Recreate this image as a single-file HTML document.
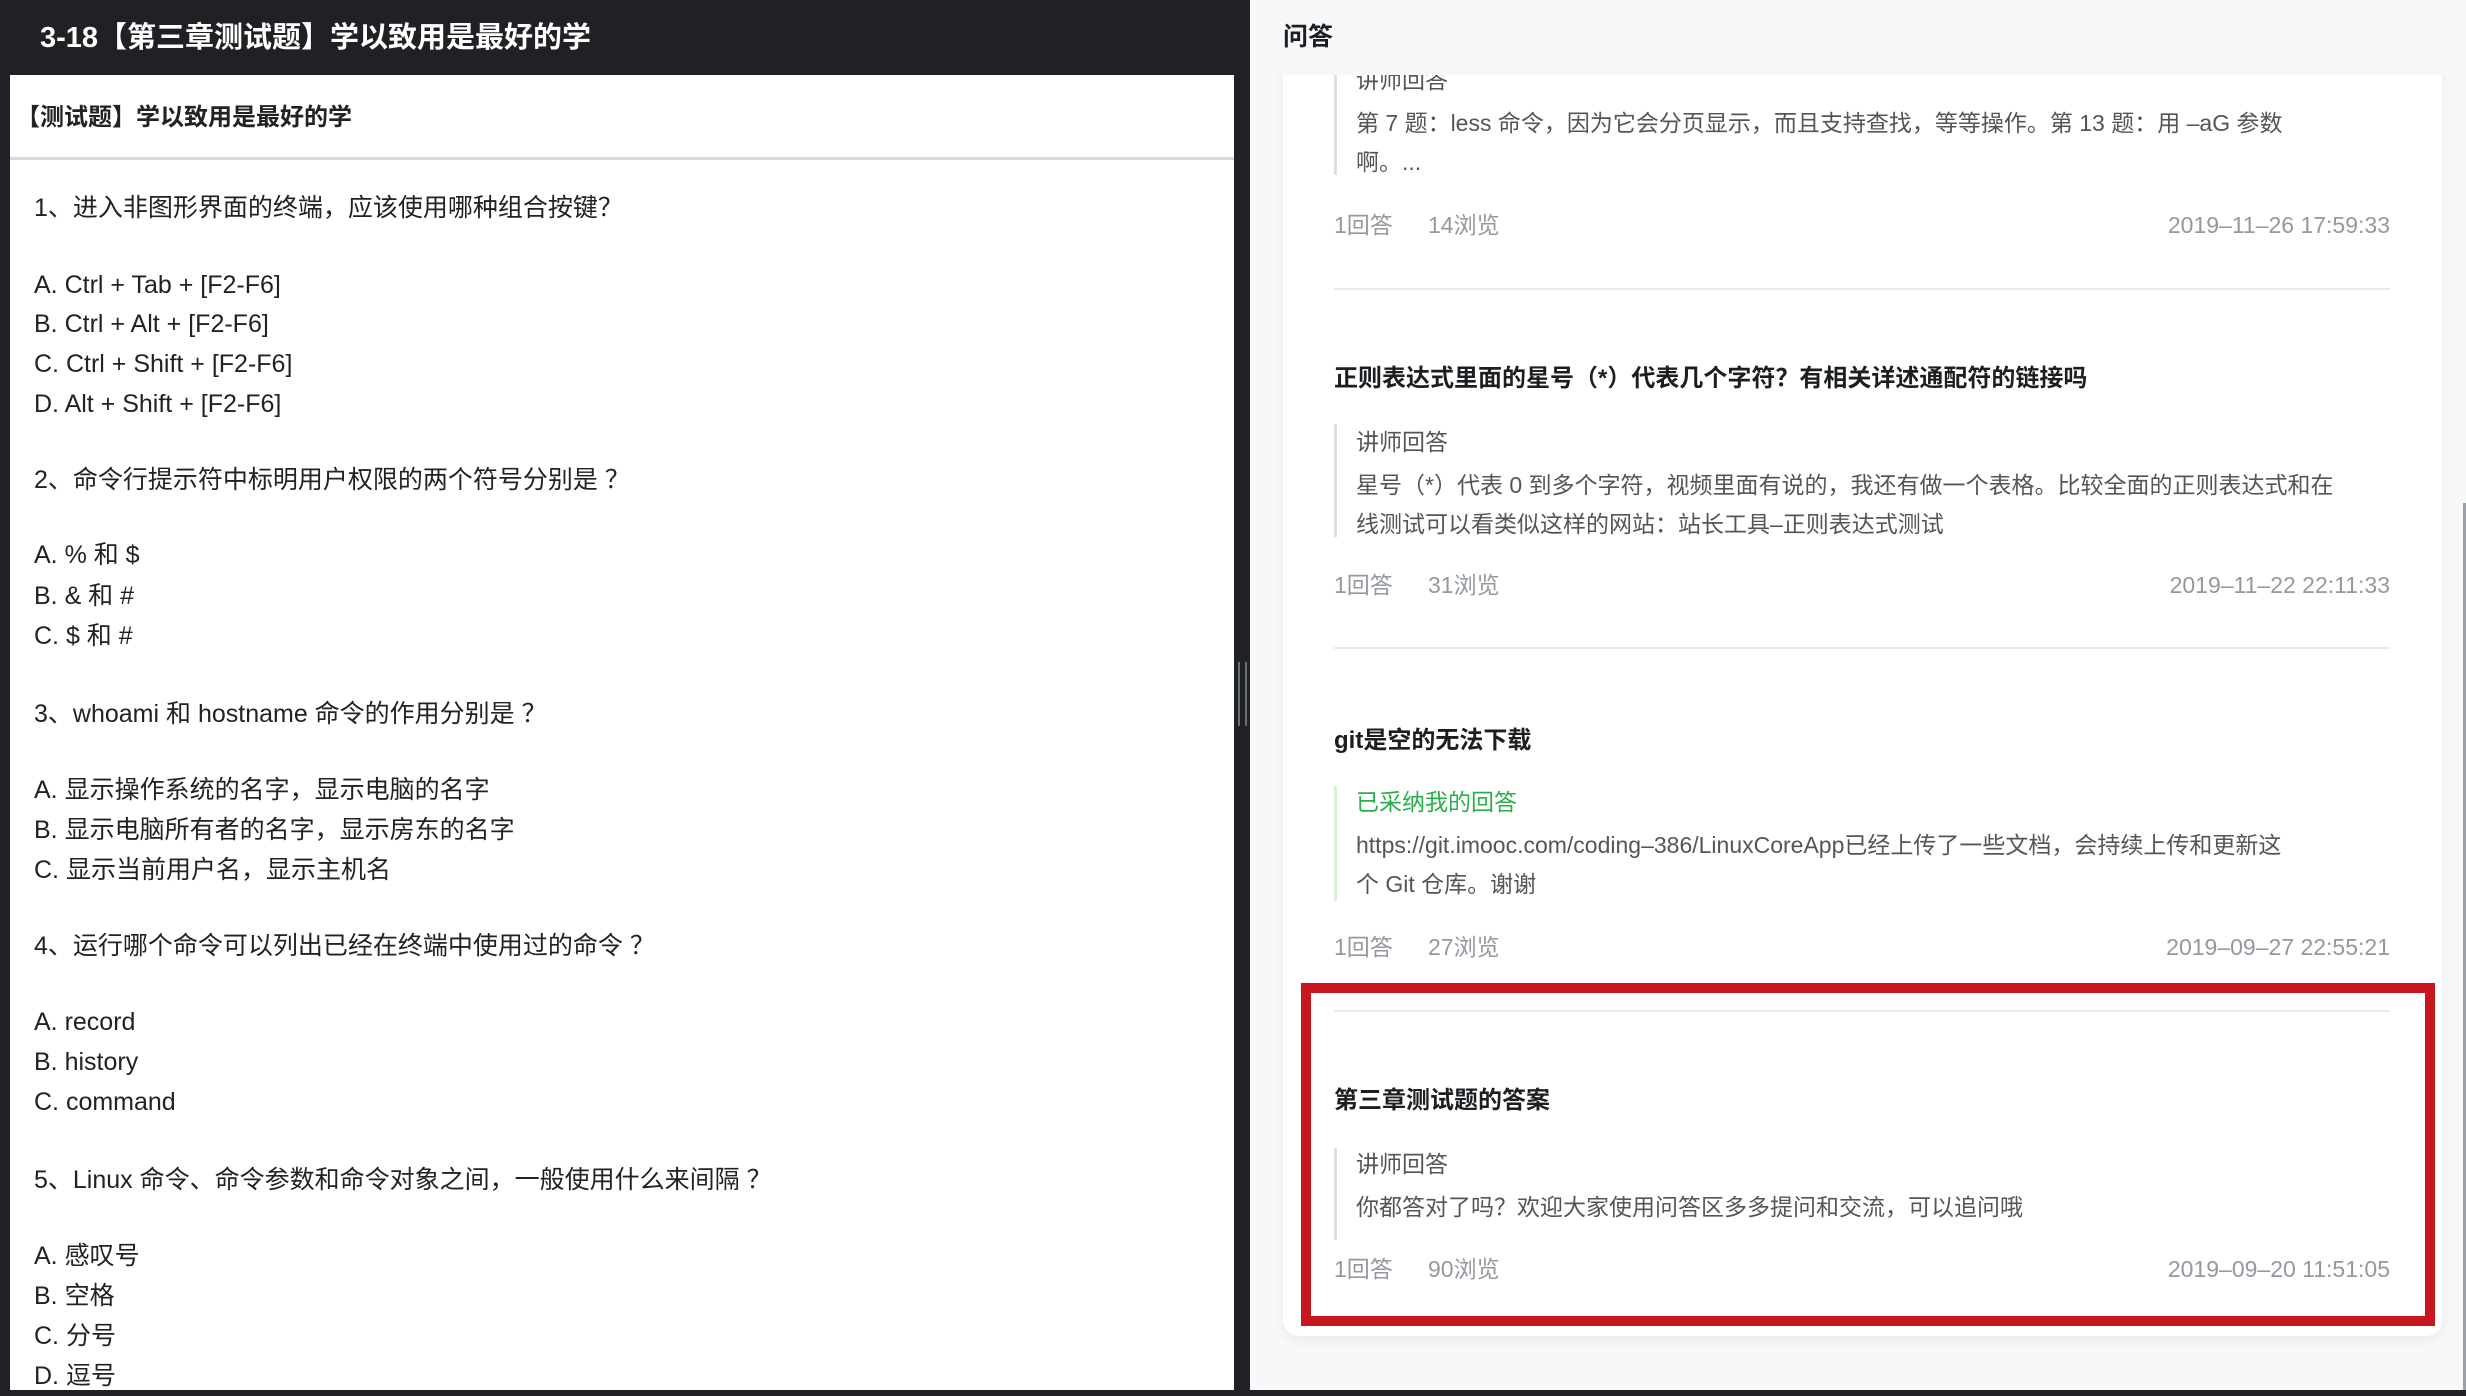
<!DOCTYPE html>
<html><head><meta charset="utf-8"><style>
*{margin:0;padding:0;box-sizing:border-box}
body{width:2466px;height:1390px;overflow:hidden;position:relative;background:#202124;font-family:"Liberation Sans","Noto Sans CJK SC",sans-serif}
.a{position:absolute;white-space:nowrap}
#hdr{left:0;top:0;width:1234px;height:75px;background:#202124}
#left{left:10px;top:75px;width:1224px;height:1315px;background:#fff}
.l{position:absolute;left:34px;font-size:25px;color:#222;line-height:40px;white-space:nowrap}
#right{left:1250px;top:0;width:1216px;height:1390px;background:#f7f8fa}
#card{left:1283px;top:0;width:1159px;height:1336px;background:#fff;border-radius:0 0 16px 16px;box-shadow:0 4px 12px rgba(0,0,0,.06)}
.r{position:absolute;left:1356px;font-size:23px;color:#555;line-height:38px;white-space:nowrap}
.t{position:absolute;left:1334px;font-size:24px;color:#1c1f21;font-weight:bold;line-height:38px;white-space:nowrap}
.m{position:absolute;font-size:23px;color:#93999f;line-height:36px;white-space:nowrap}
.bq{position:absolute;left:1334px;width:3px;background:#dcdfe3}
.dv{position:absolute;left:1334px;width:1056px;height:2px;background:#e9eaec}
#rh{left:1250px;top:0;width:1216px;height:75px;background:#f7f8fa}
</style></head><body>
<div class="a" id="hdr"></div>
<div class="a" style="left:40px;top:18px;font-size:29px;color:#fff;font-weight:bold;line-height:40px">3-18【第三章测试题】学以致用是最好的学</div>
<div class="a" id="left"></div>
<div class="a" style="left:16px;top:99px;font-size:24px;font-weight:bold;color:#222;line-height:38px">【测试题】学以致用是最好的学</div>
<div class="a" style="left:10px;top:157px;width:1224px;height:3px;background:#d8dbde"></div>
<div class="l" style="top:188px">1、进入非图形界面的终端，应该使用哪种组合按键？</div>
<div class="l" style="top:265px">A. Ctrl + Tab + [F2-F6]</div>
<div class="l" style="top:304px">B. Ctrl + Alt + [F2-F6]</div>
<div class="l" style="top:344px">C. Ctrl + Shift + [F2-F6]</div>
<div class="l" style="top:384px">D. Alt + Shift + [F2-F6]</div>
<div class="l" style="top:460px">2、命令行提示符中标明用户权限的两个符号分别是 ？</div>
<div class="l" style="top:535px">A. % 和 $</div>
<div class="l" style="top:576px">B. &amp; 和 #</div>
<div class="l" style="top:616px">C. $ 和 #</div>
<div class="l" style="top:694px">3、whoami 和 hostname 命令的作用分别是 ？</div>
<div class="l" style="top:770px">A. 显示操作系统的名字，显示电脑的名字</div>
<div class="l" style="top:810px">B. 显示电脑所有者的名字，显示房东的名字</div>
<div class="l" style="top:850px">C. 显示当前用户名，显示主机名</div>
<div class="l" style="top:926px">4、运行哪个命令可以列出已经在终端中使用过的命令 ？</div>
<div class="l" style="top:1002px">A. record</div>
<div class="l" style="top:1042px">B. history</div>
<div class="l" style="top:1082px">C. command</div>
<div class="l" style="top:1160px">5、Linux 命令、命令参数和命令对象之间，一般使用什么来间隔 ？</div>
<div class="l" style="top:1236px">A. 感叹号</div>
<div class="l" style="top:1276px">B. 空格</div>
<div class="l" style="top:1316px">C. 分号</div>
<div class="l" style="top:1356px">D. 逗号</div>
<div class="a" style="left:1238px;top:662px;width:2px;height:64px;background:#6b7078"></div>
<div class="a" style="left:1245px;top:662px;width:2px;height:64px;background:#6b7078"></div>
<div class="a" id="right"></div>
<div class="a" id="card"></div>
<div class="a" style="left:2463px;top:503px;width:3px;height:887px;background:#9aa0a6"></div>

<div class="r" style="top:61px">讲师回答</div>
<div class="bq" style="top:75px;height:100px"></div>
<div class="r" style="top:104px">第 7 题：less 命令，因为它会分页显示，而且支持查找，等等操作。第 13 题：用 –aG 参数</div>
<div class="r" style="top:143px">啊。...</div>
<div class="m" style="left:1334px;top:207px">1回答</div><div class="m" style="left:1428px;top:207px">14浏览</div>
<div class="m" style="right:76px;top:207px">2019–11–26 17:59:33</div>
<div class="dv" style="top:288px"></div>

<div class="t" style="top:360px">正则表达式里面的星号（*）代表几个字符？有相关详述通配符的链接吗</div>
<div class="bq" style="top:424px;height:113px"></div>
<div class="r" style="top:423px">讲师回答</div>
<div class="r" style="top:466px">星号（*）代表 0 到多个字符，视频里面有说的，我还有做一个表格。比较全面的正则表达式和在</div>
<div class="r" style="top:505px">线测试可以看类似这样的网站：站长工具–正则表达式测试</div>
<div class="m" style="left:1334px;top:567px">1回答</div><div class="m" style="left:1428px;top:567px">31浏览</div>
<div class="m" style="right:76px;top:567px">2019–11–22 22:11:33</div>
<div class="dv" style="top:647px"></div>

<div class="t" style="top:722px">git是空的无法下载</div>
<div class="bq" style="top:786px;height:115px;background:#d6f0dc"></div>
<div class="r" style="top:783px;color:#2aaf4a">已采纳我的回答</div>
<div class="r" style="top:826px">https://git.imooc.com/coding–386/LinuxCoreApp已经上传了一些文档，会持续上传和更新这</div>
<div class="r" style="top:865px">个 Git 仓库。谢谢</div>
<div class="m" style="left:1334px;top:929px">1回答</div><div class="m" style="left:1428px;top:929px">27浏览</div>
<div class="m" style="right:76px;top:929px">2019–09–27 22:55:21</div>
<div class="dv" style="top:1010px"></div>

<div class="t" style="top:1082px">第三章测试题的答案</div>
<div class="bq" style="top:1148px;height:92px"></div>
<div class="r" style="top:1145px">讲师回答</div>
<div class="r" style="top:1188px">你都答对了吗？欢迎大家使用问答区多多提问和交流，可以追问哦</div>
<div class="m" style="left:1334px;top:1251px">1回答</div><div class="m" style="left:1428px;top:1251px">90浏览</div>
<div class="m" style="right:76px;top:1251px">2019–09–20 11:51:05</div>

<div class="a" id="rh"></div>
<div class="a" style="left:1283px;top:18px;font-size:25px;font-weight:bold;color:#1c1f21;line-height:38px">问答</div>
<div class="a" style="left:1301px;top:983px;width:1134px;height:343px;border:10px solid #c8161e"></div>
</body></html>
